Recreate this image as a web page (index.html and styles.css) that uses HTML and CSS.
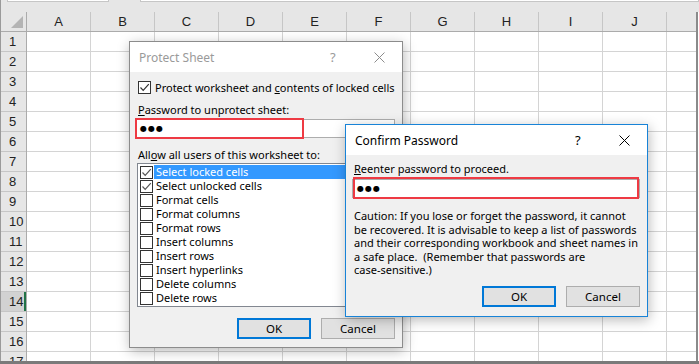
FILE: index.html
```html
<!DOCTYPE html>
<html lang="en">
<head>
  <meta charset="UTF-8" />
  <title>Protect Sheet</title>
  <link rel="stylesheet" href="styles.css">
</head>
<body>

  <div class="app">
    <div class="fbar">
      <div class="namebox"></div>
      <div class="formula"></div>
    </div>

    <div class="sheet">
      <div class="corner"><span class="tri"></span></div>
      <div class="colheads">
        <div>A</div><div>B</div><div>C</div><div>D</div><div>E</div>
        <div>F</div><div>G</div><div>H</div><div>I</div><div>J</div><div></div>
      </div>
      <div class="rowheads">
        <div>1</div><div>2</div><div>3</div><div>4</div><div>5</div><div>6</div>
        <div>7</div><div>8</div><div>9</div><div>10</div><div>11</div><div>12</div>
        <div>13</div><div class="sel">14</div><div>15</div><div>16</div><div>17</div>
      </div>
      <div class="cells"></div>
    </div>
    <div class="hscroll"></div>

    <!-- Protect Sheet (inactive) -->
    <div class="dlg protect">
      <div class="titlebar">
        <span class="title">Protect Sheet</span>
        <span class="help">?</span>
        <svg class="close" width="11" height="11" viewBox="0 0 11 11"><path d="M0.5 0.5L10.5 10.5M10.5 0.5L0.5 10.5" stroke="currentColor" stroke-width="1" fill="none"/></svg>
      </div>
      <div class="body">
        <div class="chkrow">
          <span class="chk on"><svg width="11" height="11" viewBox="0 0 11 11"><path d="M1.5 5.5L4.2 8.3L9.8 2.2" stroke="#333" stroke-width="1.2" fill="none"/></svg></span>
          <span>Protect worksheet and <u>c</u>ontents of locked cells</span>
        </div>
        <div class="lbl"><u>P</u>assword to unprotect sheet:</div>
        <div class="field wide">
          <span class="dots">●●●</span>
          <span class="mark m1"></span>
        </div>
        <div class="lbl lbl2">All<u>o</u>w all users of this worksheet to:</div>
        <ul class="opts">
          <li class="hl"><span class="chk on"><svg width="11" height="11" viewBox="0 0 11 11"><path d="M1.5 5.5L4.2 8.3L9.8 2.2" stroke="#555" stroke-width="1.2" fill="none"/></svg></span><span class="txt">Select locked cells</span></li>
          <li><span class="chk on"><svg width="11" height="11" viewBox="0 0 11 11"><path d="M1.5 5.5L4.2 8.3L9.8 2.2" stroke="#555" stroke-width="1.2" fill="none"/></svg></span><span class="txt">Select unlocked cells</span></li>
          <li><span class="chk"></span><span class="txt">Format cells</span></li>
          <li><span class="chk"></span><span class="txt">Format columns</span></li>
          <li><span class="chk"></span><span class="txt">Format rows</span></li>
          <li><span class="chk"></span><span class="txt">Insert columns</span></li>
          <li><span class="chk"></span><span class="txt">Insert rows</span></li>
          <li><span class="chk"></span><span class="txt">Insert hyperlinks</span></li>
          <li><span class="chk"></span><span class="txt">Delete columns</span></li>
          <li><span class="chk"></span><span class="txt">Delete rows</span></li>
        </ul>
        <div class="btns">
          <button class="btn default">OK</button>
          <button class="btn">Cancel</button>
        </div>
      </div>
    </div>

    <!-- Confirm Password (active) -->
    <div class="dlg confirm">
      <div class="titlebar">
        <span class="title">Confirm Password</span>
        <span class="help">?</span>
        <svg class="close" width="11" height="11" viewBox="0 0 11 11"><path d="M0.5 0.5L10.5 10.5M10.5 0.5L0.5 10.5" stroke="currentColor" stroke-width="1" fill="none"/></svg>
      </div>
      <div class="body">
        <div class="lbl"><u>R</u>eenter password to proceed.</div>
        <div class="field">
          <span class="dots">●●●</span>
          <span class="mark m2"></span>
        </div>
        <p class="caution">Caution: If you lose or forget the password, it cannot<br>be recovered. It is advisable to keep a list of passwords<br>and their corresponding workbook and sheet names in<br>a safe place.&nbsp; (Remember that passwords are<br>case-sensitive.)</p>
        <div class="btns">
          <button class="btn default">OK</button>
          <button class="btn">Cancel</button>
        </div>
      </div>
    </div>
  </div>

</body>
</html>
```

FILE: styles.css
```css
:root { --grid: #d4d4d4; --head: #e6e6e6; --headline: #ababab; --face: #f0f0f0; --blue: #0078d7; }
* { box-sizing: border-box; }
body { margin: 0; width: 699px; height: 364px; overflow: hidden; background: #fff; font-family: 'Noto Sans', 'Open Sans', sans-serif; font-size: 11px; color: #000; }
u { text-decoration: underline; text-underline-offset: 1px; }

.app { position: relative; width: 699px; height: 364px; border-left: 1px solid #9a9a9a; }

/* formula bar strip */
.fbar { height: 12px; background: var(--head); display: flex; }
.namebox, .formula { height: 2px; background: #fff; border: 1px solid #c6c6c6; border-top: 0; }
.namebox { margin-left: 6px; width: 102px; }
.formula { margin-left: 31px; flex: 1; }

/* sheet */
.sheet { display: grid; grid-template-columns: 26px 1fr; grid-template-rows: 20px 1fr; height: 349px; width: 697px; overflow: hidden; border-right: 2px solid #8a8a8a; }
.corner { background: var(--head); border-right: 1px solid var(--headline); border-bottom: 1px solid var(--headline); position: relative; }
.tri { position: absolute; right: 3px; bottom: 3px; width: 0; height: 0; border-left: 12px solid transparent; border-bottom: 12px solid #b4b4b4; }
.colheads { display: flex; background: var(--head); border-bottom: 1px solid var(--headline); }
.colheads div { flex: 0 0 64px; border-right: 1px solid #c6c6c6; text-align: center; line-height: 19px; font-family: 'Liberation Sans', Arial, sans-serif; font-size: 13px; color: #222; }
.rowheads { background: var(--head); border-right: 1px solid var(--headline); }
.rowheads div { height: 20px; border-bottom: 1px solid #c6c6c6; line-height: 19px; padding-left: 8px; font-family: 'Liberation Sans', Arial, sans-serif; font-size: 13px; color: #222; }
.rowheads .sel { background: #d2d2d2; box-shadow: inset -2px 0 0 #217346; }
.cells { background-color: #fff;
  background-image: repeating-linear-gradient(to right, transparent 0 63px, var(--grid) 63px 64px),
                    repeating-linear-gradient(to bottom, transparent 0 19px, var(--grid) 19px 20px); }
.hscroll { height: 3px; background: #7a7a7a; margin-left: -1px; }

/* dialogs */
.dlg { position: absolute; background: var(--face); box-shadow: 1px 3px 12px rgba(0, 0, 0, 0.28); white-space: nowrap; }
.protect { left: 128px; top: 41px; width: 274px; height: 307px; border: 1px solid #8c8c8c; }
.confirm { left: 344px; top: 124px; width: 303px; height: 193px; border: 1px solid #1883d7; }
.titlebar { height: 30px; background: #fff; display: flex; align-items: center; padding-left: 9px; }
.title { flex: 1; font-size: 12px; }
.protect .titlebar { color: #9a9a9a; }
.help { width: 14px; font-size: 13px; margin-right: 30px; }
.close { margin-right: 17px; color: #000; }
.protect .close { color: #8c8c8c; }

.body { padding: 0 7px 0 6px; }
.protect .body { padding-top: 9px; }
.confirm .body { padding-top: 6px; }
.chkrow { display: flex; align-items: center; gap: 4px; height: 13px; padding-left: 2px; }
.chk { flex: 0 0 13px; width: 13px; height: 13px; border: 1px solid #333; background: #fff; display: flex; align-items: center; justify-content: center; }
.lbl { margin-top: 8px; padding-left: 2px; line-height: 16px; }
.confirm .lbl { margin-top: 0; padding-left: 2px; }
.lbl2 { margin-top: 9px; }

.field { position: relative; height: 19px; margin-top: 1px; background: #fff; border: 1px solid #adadad; padding-left: 4px; line-height: 17px; }
.confirm .field { margin-top: 2px; }
.field.wide { margin-left: -1px; }
.dots { font-family: 'DejaVu Sans', sans-serif; font-size: 8px; letter-spacing: 1px; vertical-align: top; }
.mark { position: absolute; border: 2px solid #ee3a43; }
.m1 { left: -1px; top: -2px; width: 169px; height: 21px; }
.m2 { left: 0; top: -3px; width: 286px; height: 22px; }

.opts { list-style: none; margin: 0 0 0 1px; padding: 1px 0 1px 2px; height: 144px; background: #fff; border: 1px solid #828790; width: 260px; }
.opts li { display: flex; align-items: center; height: 14px; }
.opts .chk { width: 13px; height: 13px; border-color: #333; }
.opts .txt { flex: 1; height: 14px; line-height: 14px; padding-left: 2px; margin-left: 1px; }
.opts .hl .txt { background: #3399ff; color: #fff; }

.btns { display: flex; justify-content: flex-end; gap: 10px; margin-top: 11px; }
.btn { width: 74px; height: 21px; padding: 0; border: 1px solid #adadad; background: #e1e1e1; font-family: inherit; font-size: 11.5px; color: #000; }
.btn.default { border: 2px solid var(--blue); }

.caution { margin: 11px 0 0 2px; line-height: 13.6px; }
.confirm .btns { margin-top: 9px; }
```
